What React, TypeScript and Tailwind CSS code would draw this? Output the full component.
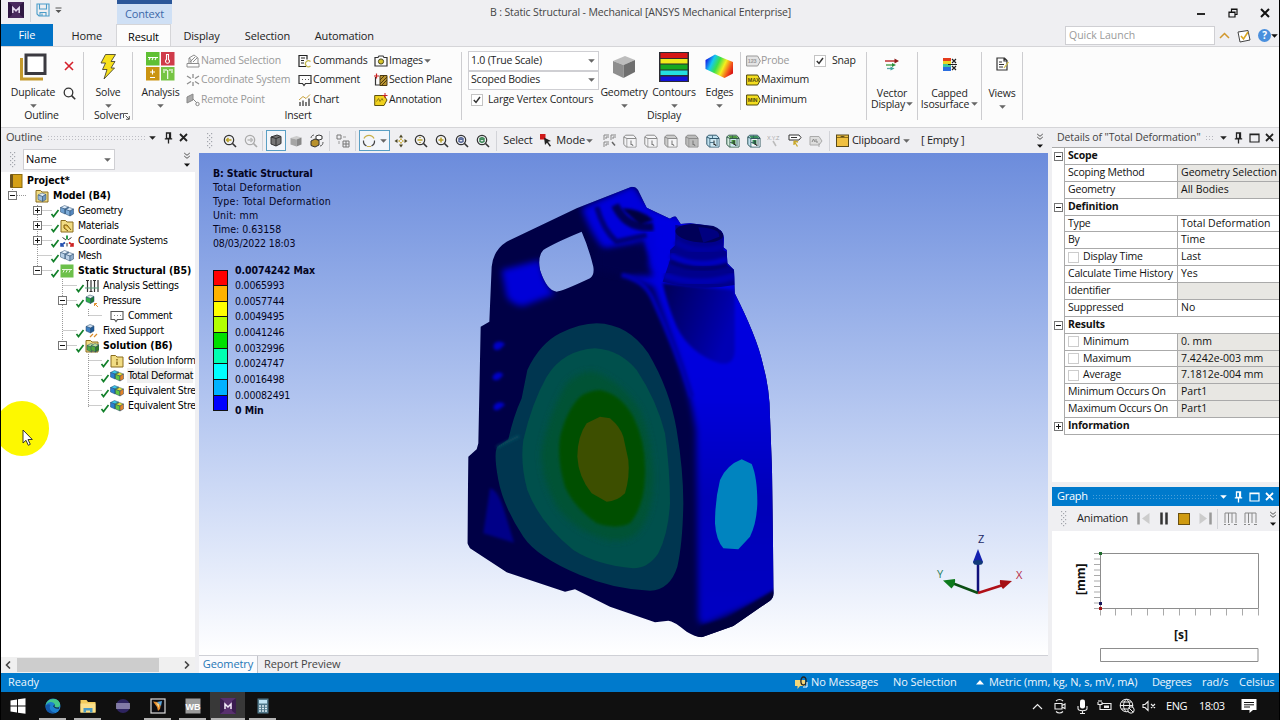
import type { ReactNode } from 'react';

type IconProps = { w?: number; h?: number; className?: string; children: ReactNode };

function Svg({ w = 14, h = 14, className = '', children }: IconProps) {
  return (
    <svg width={w} height={h} viewBox={`0 0 ${w} ${h}`} fill="none" className={`shrink-0 ${className}`}>
      {children}
    </svg>
  );
}

function Caret({ color = '#666', className = '' }: { color?: string; className?: string }) {
  return (
    <Svg w={7} h={4} className={className}>
      <path d="M0.2 0.2h6.600L3.500 3.800z" fill={color} />
    </Svg>
  );
}

function Grip() {
  return (
    <Svg w={6} h={16}>
      {[0, 4, 8, 12].map((y) => (
        <g key={y} fill="#a3a6ad">
          <rect x="0" y={y} width="1.2" height="1.2" />
          <rect x="4" y={y} width="1.2" height="1.2" />
          <rect x="2" y={y + 2} width="1.2" height="1.2" />
        </g>
      ))}
    </Svg>
  );
}

function Overflow() {
  return (
    <Svg w={8} h={16}>
      <path d="M1.2 1l2.8 2.3L6.8 1M1.2 4l2.8 2.3L6.8 4" stroke="#555" strokeWidth="1" />
      <path d="M1 11.5h6L4 14.7z" fill="#111" />
    </Svg>
  );
}

function Pin({ color }: { color: string }) {
  return (
    <Svg w={9} h={12}>
      <path d="M2.5 1h4v5.5h-4zM5.6 1v5.5M0.8 6.9h7.4M4.5 7v4.5" stroke={color} strokeWidth="1.3" />
    </Svg>
  );
}

function Cross({ color }: { color: string }) {
  return (
    <Svg w={9} h={9}>
      <path d="M1 1l7 7M8 1L1 8" stroke={color} strokeWidth="1.8" />
    </Svg>
  );
}

function Box({ color }: { color: string }) {
  return (
    <Svg w={11} h={10}>
      <path d="M1 1h9v8H1zM1 1.6h9" stroke={color} strokeWidth="1.2" />
    </Svg>
  );
}

function Check({ on }: { on?: boolean }) {
  return (
    <span className="flex h-3 w-3 shrink-0 items-center justify-center border border-[#c4c4c4] bg-white">
      {on && (
        <Svg w={10} h={10}>
          <path d="M1.8 5l2.2 2.4L8 2" stroke="#333" strokeWidth="1.5" />
        </Svg>
      )}
    </span>
  );
}

/* ---------- title bar and tabs ---------- */

function AppBadge() {
  return (
    <Svg w={16} h={16}>
      <rect width="16" height="16" fill="#4a2a5e" />
      <path d="M0 0l4 3v10l-4 3zM16 0l-4 3v10l4 3z" fill="#2f1742" />
      <path d="M4.8 11v-5.500L8 8.800l3.200-3.300V11" stroke="#e6dcf0" strokeWidth="1.500" />
    </Svg>
  );
}

function TitleBar() {
  return (
    <div className="flex h-[46px] shrink-0 bg-[#efeff2] text-[11px] tracking-[-0.15px]">
      <div className="flex w-[385px] flex-col">
        <div className="flex h-6">
          <div className="flex w-[116px] items-center pb-1">
            <span className="ml-[7px] flex"><AppBadge /></span>
            <span className="ml-[6px] h-6 w-px bg-[#d3d5da]" />
            <Svg w={14} h={14} className="ml-[5px]">
              <path d="M1 1h12v12H3l-2-2zM3.500 1v5h7V1M4 13V9.500h6V13M6 10.500v2" stroke="#4a9cc9" strokeWidth="1.100" />
            </Svg>
            <Svg w={7} h={7} className="ml-[5px]">
              <path d="M0.500 1h6" stroke="#555" />
              <path d="M0.500 3h6L3.500 6z" fill="#555" />
            </Svg>
          </div>
          <div className="flex w-[55px] items-center justify-center border-t-4 border-[#2b579a] bg-[#cfe0f5] text-[#3d68a8]">Context</div>
        </div>
        <div className="flex h-[22px] items-center text-[#222]">
          <span className="flex h-full w-[52px] items-center justify-center bg-[#0072c6] text-white">File</span>
          <span className="w-[64px] pt-[3px] pl-[5px] text-center">Home</span>
          <span className="flex h-[23px] w-[55px] items-center justify-center self-start border-x border-t border-[#d5d5d8] bg-[#fcfcfc] pt-[2px] text-black">Result</span>
          <span className="w-[62px] pt-[3px] text-center">Display</span>
          <span className="w-[71px] pt-[3px] text-center">Selection</span>
          <span className="w-[84px] pt-[3px] text-center">Automation</span>
        </div>
      </div>
      <div className="flex flex-1 flex-col">
        <div className="flex h-[26px] items-center">
          <span className="ml-[104px] w-[302px] whitespace-nowrap text-[10.500px] tracking-[-0.13px] text-[#444]">B : Static Structural - Mechanical [ANSYS Mechanical Enterprise]</span>
          <Svg w={10} h={10} className="ml-[404px]">
            <path d="M1 6h8" stroke="#111" strokeWidth="1.800" />
          </Svg>
          <Svg w={10} h={10} className="ml-[22px]">
            <path d="M1 4h6v5H1zM3.500 4V1H9v5.500H7M1 4.500h6M3.500 1.500H9" stroke="#111" strokeWidth="1.200" />
          </Svg>
          <Svg w={10} h={10} className="ml-[22px]">
            <path d="M1 1l8 8M9 1L1 9" stroke="#111" strokeWidth="2" />
          </Svg>
        </div>
        <div className="flex h-[19px] items-center justify-end">
          <span className="flex h-[19px] w-[150px] items-center border border-[#cfcfd3] bg-white pl-[3px] text-[10.500px] tracking-normal text-[#9a9a9a]">Quick Launch</span>
          <Svg w={11} h={7} className="ml-[4px]">
            <path d="M1 6l4.500-4.500L10 6" stroke="#d1972c" strokeWidth="1.500" />
          </Svg>
          <Svg w={14} h={14} className="ml-[7px]">
            <path d="M1 3l10-1.500 2 9.500-10 2z" fill="#fff" stroke="#444" />
            <path d="M4 7l2.500 3L11 3" stroke="#d9a520" strokeWidth="1.600" />
          </Svg>
          <span className="ml-[7px] flex h-[13px] w-[13px] items-center justify-center rounded-full bg-[#4a8fdd] text-[10px] font-bold text-white">?</span>
          <Caret color="#111" className="mr-[1px]" />
        </div>
      </div>
    </div>
  );
}

/* ---------- ribbon ---------- */

function Sep({ short }: { short?: boolean }) {
  return <span className={`mt-[5px] w-px shrink-0 bg-[#cdcdd0] ${short ? 'h-[58px]' : 'h-[68px]'}`} />;
}

function Group({ label, className, children }: { label: ReactNode; className: string; children: ReactNode }) {
  return (
    <div className={`flex shrink-0 flex-col ${className}`}>
      <div className="flex h-[61px]">{children}</div>
      <div className="flex h-[14px] items-center justify-center leading-none">{label}</div>
    </div>
  );
}

function BigButton({ icon, label, className }: { icon: ReactNode; label: string; className: string }) {
  return (
    <div className={`flex shrink-0 flex-col items-center ${className}`}>
      <span className="flex h-[40px] items-center">{icon}</span>
      <span className="flex h-[14px] items-center whitespace-nowrap">{label}</span>
      <Caret className="mt-[4px]" />
    </div>
  );
}

function Row({ icon, label, muted, caret }: { icon: ReactNode; label: string; muted?: boolean; caret?: boolean }) {
  return (
    <div className={`flex h-[19.5px] items-center whitespace-nowrap ${muted ? 'text-[#999]' : ''}`}>
      <span className="flex w-[15px] shrink-0">{icon}</span>
      {label}
      {caret && <Caret className="ml-px" />}
    </div>
  );
}

const tag = (text: string, fill: string, stroke: string) => (
  <Svg w={15} h={12}>
    <path d="M0.600 1h11L14.400 6l-2.800 5h-11z" fill={fill} stroke={stroke} />
    <text x="1.800" y="8.300" fontSize="5.500" fontWeight="700" fontFamily="Liberation Sans" fill={stroke}>{text}</text>
  </Svg>
);

const analysisIcon = (
  <Svg w={29} h={29}>
    <rect x="0" y="0" width="13.500" height="13.500" fill="#5fc034" />
    <path d="M2 5.500h10M3 8l1-2M6 8l1-2M9 8l1-2" stroke="#fff" strokeWidth="1.100" />
    <rect x="15" y="0" width="13.500" height="13.500" fill="#cf3b4a" />
    <path d="M20.500 2.500h2v5a2 2 0 1 1-2 0z" stroke="#fff" strokeWidth="1.100" />
    <rect x="0" y="15" width="13.500" height="13.500" fill="#cb9411" />
    <path d="M4 20h5M6.500 17.500v5M4 25.500h5" stroke="#fff" strokeWidth="1.100" />
    <rect x="15" y="15" width="13.500" height="13.500" fill="#76c443" />
    <path d="M21.700 18v9M18 17v4M20 17v2M24 17v2M26 17v4" stroke="#fff" strokeWidth="1.100" />
  </Svg>
);

const contoursIcon = (
  <Svg w={30} h={30}>
    <rect width="30" height="30" fill="#2b2b33" />
    <rect x="1.500" y="1" width="27" height="5" fill="#d41616" />
    <rect x="1.500" y="7" width="27" height="4.500" fill="#f0ea1c" />
    <rect x="1.500" y="12.500" width="27" height="5" fill="#17a81f" />
    <rect x="1.500" y="18.500" width="27" height="4.500" fill="#25dfe0" />
    <rect x="1.500" y="24.500" width="27" height="4.500" fill="#1212d8" />
  </Svg>
);

const edgesIcon = (
  <Svg w={29} h={27}>
    <defs>
      <linearGradient id="edges" x1="0" y1="0.300" x2="1" y2="0.700">
        <stop offset="0" stopColor="#1520e8" />
        <stop offset="0.220" stopColor="#14c8f0" />
        <stop offset="0.420" stopColor="#3be04a" />
        <stop offset="0.640" stopColor="#f4ef1e" />
        <stop offset="0.850" stopColor="#f4591b" />
        <stop offset="1" stopColor="#d81313" />
      </linearGradient>
    </defs>
    <path d="M0.500 7L10 1.500l8 3.500 10 4v11.500L19.500 25 10 20.500 0.500 16z" fill="url(#edges)" />
  </Svg>
);

function Select({ children }: { children: string }) {
  return (
    <div className="flex h-[19.5px] items-center justify-between border border-[#cfcfd3] bg-white pr-[3px] pl-[2px]">
      <span>{children}</span>
      <Caret />
    </div>
  );
}

function Ribbon() {
  return (
    <div className="flex h-[82px] shrink-0 border-y border-[#d5d5d8] bg-[#fcfcfc] text-[10.500px] tracking-[-0.2px] text-[#1e1e1e]">
      <Group label="Outline" className="w-[82px] pr-px">
        <BigButton
          className="w-[57px] pl-[7px]"
          label="Duplicate"
          icon={
            <Svg w={27} h={28}>
              <path d="M1.500 5v21H23" stroke="#c49a2e" strokeWidth="3" />
              <rect x="6" y="2" width="19" height="18.500" fill="#fff" stroke="#3b3a40" strokeWidth="3" />
            </Svg>
          }
        />
        <div className="flex w-[22px] flex-col items-center">
          <span className="flex h-[38px] items-center">
            <Svg w={10} h={10}>
              <path d="M1 1l8 8M9 1L1 9" stroke="#d5202c" strokeWidth="1.600" />
            </Svg>
          </span>
          <Svg w={13} h={13} className="mt-[2px]">
            <circle cx="5.500" cy="5.500" r="4.300" stroke="#333" strokeWidth="1.300" />
            <path d="M8.600 8.600l3.600 3.600" stroke="#333" strokeWidth="1.600" />
          </Svg>
        </div>
      </Group>
      <Sep />
      <Group
        className="w-[48px]"
        label={
          <span className="flex items-end pl-2">
            Solver
            <Svg w={7} h={7}>
              <path d="M0.500 5V0.500H5M2.500 2.500l3.500 3.500M6.300 3v3.300H3" stroke="#555" />
            </Svg>
          </span>
        }
      >
        <BigButton
          className="w-[48px]"
          label="Solve"
          icon={
            <Svg w={17} h={27}>
              <path d="M5.500 1.500h10l-4.500 7h4L11 15h3.500L4 26l3-9.500H2.500L5.500 10H1z" fill="#f7e01c" stroke="#4a4630" strokeWidth="0.900" />
            </Svg>
          }
        />
      </Group>
      <Sep />
      <Group label="Insert" className="w-[328px] pl-0.5">
        <BigButton className="w-[51px]" label="Analysis" icon={analysisIcon} />
        <div className="w-[112px] pt-1">
          <Row muted label="Named Selection" icon={<Svg w={14}><path d="M1 9.500h12V13H1zM3 9V4l5-3 4 3v5M4 8l5-5M7 8l4-4M3 4l2 1.500V9" stroke="#8d8d8d" /></Svg>} />
          <Row muted label="Coordinate System" icon={<Svg w={14}><path d="M7 1v4M7 9v4M1 3l4 2.500M13 3L9 5.500M1 11l4-2.500M13 11L9 8.500" stroke="#8d8d8d" strokeWidth="1.300" /></Svg>} />
          <Row muted label="Remote Point" icon={<Svg w={14}><path d="M1 4l6-3v6L1 10z" fill="#aaa" stroke="#888" /><path d="M7 6l4 4" stroke="#888" /><circle cx="11.500" cy="11" r="1.700" stroke="#888" /></Svg>} />
        </div>
        <div className="w-[76px] pt-1">
          <Row label="Commands" icon={<Svg w={14}><path d="M8 12.500H1v-11h8v4M3 4h4M3 6.500h3M3 9h3" stroke="#222" strokeWidth="1.200" /><path d="M12.500 7.500a3 3 0 1 0 0 4.500" stroke="#c3b64c" strokeWidth="1.300" /></Svg>} />
          <Row label="Comment" icon={<Svg w={14}><path d="M1 2.500h12v8H7.500L6 12.500 4.500 10.500H1z" stroke="#333" strokeWidth="1.200" /><path d="M4 6.500h1M7 6.500h1M10 6.500h1" stroke="#555" /></Svg>} />
          <Row label="Chart" icon={<Svg w={14}><path d="M2 13V9M5 13V7.500M8 13V9M11 13V5.500" stroke="#555" strokeWidth="1.500" /><path d="M1 7l4-3.500 3 2 4-4" stroke="#c9a23b" /></Svg>} />
        </div>
        <div className="pt-1">
          <Row caret label="Images" icon={<Svg w={14}><path d="M1 3.500h3L5 2h4l1 1.500h3v8.500H1z" stroke="#333" strokeWidth="1.200" /><circle cx="7" cy="7.500" r="2.600" fill="#d6c32a" stroke="#4b4a20" /></Svg>} />
          <Row label="Section Plane" icon={<Svg w={14}><path d="M1.500 4v8h5" stroke="#333" strokeWidth="1.200" /><path d="M6 2.500h7v10H6z" fill="#ba9430" stroke="#4b3a10" /><path d="M6 11l7-7M6 7l4-4M8 12l5-5" stroke="#4b3a10" /><path d="M2.500 0.500v5M0 3h5" stroke="#c92020" strokeWidth="1.200" /></Svg>} />
          <Row label="Annotation" icon={<Svg w={14}><path d="M0.700 2.500h9.300l3 4.500-3 5.500H0.700z" fill="#f0d11e" stroke="#5e5310" /><path d="M2.500 8.500l2-3 1.500 3 2-3 1 2" stroke="#8f7b14" /><path d="M11 0v5M8.500 2.500h5" stroke="#c92020" /></Svg>} />
        </div>
      </Group>
      <Sep />
      <Group label="Display" className="w-[404px]">
        <div className="ml-[6px] w-[131px] pt-1">
          <Select>1.0 (True Scale)</Select>
          <Select>Scoped Bodies</Select>
          <div className="flex h-[19.500px] items-center pl-[3px] whitespace-nowrap">
            <Check on />
            <span className="ml-[5px]">Large Vertex Contours</span>
          </div>
        </div>
        <BigButton
          className="w-[50px]"
          label="Geometry"
          icon={
            <Svg w={24} h={24}>
              <path d="M1 6L13 1l10 4-11.500 5z" fill="#bdbdbd" />
              <path d="M1 6l10.500 4v13L1 18z" fill="#8e8e8e" />
              <path d="M23 5L11.500 10v13L23 17z" fill="#6f6f6f" />
            </Svg>
          }
        />
        <BigButton className="w-[50px]" label="Contours" icon={contoursIcon} />
        <BigButton className="w-[41px]" label="Edges" icon={edgesIcon} />
        <Sep short />
        <div className="ml-[5px] w-[68px] pt-1">
          <Row muted label="Probe" icon={tag('123', '#e4e4e4', '#999')} />
          <Row label="Maximum" icon={tag('MAX', '#f3dd1f', '#4f480d')} />
          <Row label="Minimum" icon={tag('MIN', '#f3dd1f', '#4f480d')} />
        </div>
        <div className="flex h-[23px] items-center gap-[6px] pt-1">
          <Check on />
          Snap
        </div>
      </Group>
      <Sep />
      <div className="flex w-[50px] shrink-0 flex-col items-center">
        <span className="flex h-[34px] items-center">
          <Svg w={14} h={13}>
            <path d="M0 3h11" stroke="#b22" strokeWidth="1.400" />
            <path d="M9.500 0.500L14 3 9.500 5.500z" fill="#8d1b1b" />
            <path d="M1 7h7" stroke="#3a9a3a" strokeWidth="1.300" />
            <path d="M7 5l4 2-4 2z" fill="#2b8d3a" />
            <path d="M2 10.500h4" stroke="#58a8a8" strokeWidth="1.300" />
            <path d="M5.500 8.500l4 2-4 2z" fill="#3f9f9a" />
          </Svg>
        </span>
        <span className="mt-[7px] leading-[10.500px]">Vector</span>
        <span className="flex items-center leading-[10.500px]">Display<Caret className="ml-px" /></span>
      </div>
      <Sep />
      <div className="flex w-[63px] shrink-0 flex-col items-center">
        <span className="flex h-[34px] items-center">
          <Svg w={14} h={13}>
            <rect y="0" width="8" height="3" fill="#e53b1c" />
            <rect y="3" width="8" height="3" fill="#ecd522" />
            <rect y="6" width="8" height="3" fill="#3bc8a0" />
            <rect y="9" width="8" height="4" fill="#2a6ee0" />
            <path d="M9 1l4 4M13 1L9 5M9 8l4 4M13 8l-4 4M5 6.500h9" stroke="#222" strokeWidth="1.200" />
          </Svg>
        </span>
        <span className="mt-[7px] leading-[10.500px]">Capped</span>
        <span className="flex items-center leading-[10.500px]">Isosurface<Caret className="ml-[2px]" /></span>
      </div>
      <Sep />
      <BigButton
        className="w-[40px]"
        label="Views"
        icon={
          <Svg w={13} h={14} className="-mt-1.5">
            <path d="M1 1h7.500L11 3.500V13H1zM3 5h3M3 7.500h5M3 10h4M8 1v3h3" stroke="#333" strokeWidth="1.200" />
            <path d="M12.500 5L8 11" stroke="#d4c046" strokeWidth="1.200" />
          </Svg>
        }
      />
      <Sep />
    </div>
  );
}

/* ---------- outline panel ---------- */

function Dots({ className }: { className: string }) {
  return <span className={`h-[6px] bg-[radial-gradient(circle,currentColor_0.7px,transparent_0.8px)] bg-size-[3px_3px] ${className}`} />;
}

type TreeKind = 'book' | 'model' | 'solid' | 'materials' | 'axes' | 'mesh' | 'static' | 'settings' | 'pressure' | 'comment' | 'support' | 'solution' | 'info' | 'result';

const cube = (x: number, y: number, a: string, b: string, c: string) => (
  <g stroke="#27496d" strokeWidth="0.500">
    <path d={`M${x} ${y + 2}l4-2 4 1.500-3.500 2z`} fill={a} />
    <path d={`M${x} ${y + 2}l4.500 1.500v5L${x} ${y + 6.5}z`} fill={b} />
    <path d={`M${x + 4.5} ${y + 3.5}l3.500-2v5l-3.500 2z`} fill={c} />
  </g>
);

const folder = <path d="M1 3V1.500h4.500L7 3h6v10H1z" fill="#f1dc83" stroke="#8a6d1e" />;

const treeIcons: Record<TreeKind, ReactNode> = {
  book: <><rect x="2" y="0.500" width="11" height="13" fill="#d4a017" stroke="#8a6a10" /><rect x="1" y="0.500" width="3" height="13" fill="#6d5520" /></>,
  model: <>{folder}{cube(3, 4, '#dce9f5', '#9bbcdc', '#6f98c2')}</>,
  solid: <>{cube(0.5, 1.5, '#dbeaf8', '#6fa0d0', '#4d7fb5')}{cube(5.500, 3.500, '#cfe2f4', '#7fadd9', '#5587bd')}</>,
  materials: <>{folder}<path d="M4 6h3l4 5M4 6v3l4 3" stroke="#7a5a10" fill="#e5b73a" /></>,
  axes: <><path d="M7 5.500V1.500" stroke="#2c9c4b" strokeWidth="2" /><path d="M9 8.500l3.500 2.500M13 9v3h-3" stroke="#c22" strokeWidth="1.600" /><path d="M5 8.500L1.500 11M1 9v3h3" stroke="#2350b0" strokeWidth="1.600" /><path d="M2.500 3.500L6 6M11.500 3.500L8 6M7 9v3.500" stroke="#333" /></>,
  mesh: <>{cube(0.5, 1.5, '#e4eef8', '#b8cfe6', '#8facca')}{cube(5.500, 3.500, '#dde9f5', '#bdd2e8', '#8facca')}</>,
  static: <><rect x="0.500" y="0.500" width="13" height="13" fill="#6cc04a" /><path d="M2 5.500h10M3 8.500l1.500-3M6 8.500l1.500-3M9 8.500l1.500-3" stroke="#e8f7df" /></>,
  settings: <><path d="M2.500 1v12M6 1v12M9.500 1v12M13 1v12" stroke="#333" strokeWidth="1.200" /><path d="M1 1.500h3M8 1.500h3M4.500 12.500h3" stroke="#333" /><path d="M0 9h14" stroke="#5a9f7c" /></>,
  pressure: <>{cube(1, 1, '#e3efe3', '#2fae49', '#1d7a33')}<path d="M13 13L9.500 9.500M9.500 12V9.500H12" stroke="#e09030" /></>,
  comment: <><path d="M1 2.500h12v8H7.500L6 12.500 4.500 10.500H1z" fill="#fff" stroke="#555" strokeWidth="1.100" /><path d="M4 6.500h1M7 6.500h1M10 6.500h1" stroke="#888" /></>,
  support: <>{cube(1, 0.5, '#cfe2f4', '#3e7fc1', '#1f5a98')}<path d="M5 13l3-3M9 13l3-3" stroke="#d98b2b" strokeWidth="1.200" /></>,
  solution: <>{folder}{cube(2, 4.500, '#bfe39a', '#53a83c', '#c0b32c')}{cube(6, 4.500, '#bfe39a', '#53a83c', '#317c26')}</>,
  info: <>{folder}<path d="M7 5v1.500M7 7.500V11" stroke="#8a6d1e" strokeWidth="1.500" /></>,
  result: <>{cube(0.5, 1.500, '#38c5e8', '#2a7fd0', '#5bc24a')}{cube(5.500, 3.500, '#e8de2c', '#63c640', '#e58226')}</>,
};

type Node = { depth: number; kind: TreeKind; label: string; expander?: '+' | '-'; check?: boolean; bold?: boolean; active?: boolean };

const nodes: Node[] = [
  { depth: 0, kind: 'book', label: 'Project*', bold: true },
  { depth: 1, kind: 'model', label: 'Model (B4)', bold: true, expander: '-' },
  { depth: 2, kind: 'solid', label: 'Geometry', expander: '+', check: true },
  { depth: 2, kind: 'materials', label: 'Materials', expander: '+', check: true },
  { depth: 2, kind: 'axes', label: 'Coordinate Systems', expander: '+', check: true },
  { depth: 2, kind: 'mesh', label: 'Mesh', check: true },
  { depth: 2, kind: 'static', label: 'Static Structural (B5)', expander: '-', check: true, bold: true },
  { depth: 3, kind: 'settings', label: 'Analysis Settings', check: true },
  { depth: 3, kind: 'pressure', label: 'Pressure', expander: '-', check: true },
  { depth: 4, kind: 'comment', label: 'Comment' },
  { depth: 3, kind: 'support', label: 'Fixed Support', check: true },
  { depth: 3, kind: 'solution', label: 'Solution (B6)', expander: '-', check: true, bold: true },
  { depth: 4, kind: 'info', label: 'Solution Inform', check: true },
  { depth: 4, kind: 'result', label: 'Total Deformat', check: true, active: true },
  { depth: 4, kind: 'result', label: 'Equivalent Stre', check: true },
  { depth: 4, kind: 'result', label: 'Equivalent Stre', check: true },
];

const indents = ['w-0', 'w-[7px]', 'w-[32px]', 'w-[57px]', 'w-[82px]'];

function Expander({ sign }: { sign: '+' | '-' }) {
  return (
    <Svg w={9} h={9}>
      <rect x="0.500" y="0.500" width="8" height="8" fill="#fff" stroke="#777" />
      <path d={sign === '+' ? 'M2 4.500h5M4.500 2v5' : 'M2 4.500h5'} stroke="#111" />
    </Svg>
  );
}

function TreeRow({ node }: { node: Node }) {
  return (
    <div className="relative flex h-[15px] items-center whitespace-nowrap">
      <span className={`shrink-0 ${indents[node.depth]}`} />
      {node.depth > 0 && (
        <span className="flex w-[9px] shrink-0">{node.expander && <Expander sign={node.expander} />}</span>
      )}
      <span className={`flex shrink-0 items-end justify-end ${node.depth > 0 ? 'w-[18px]' : 'w-[8px]'}`}>
        {node.check && (
          <Svg w={10} h={9} className="translate-y-[3px]">
            <path d="M1.500 5l2 2.500L8.500 1" stroke="#12802a" strokeWidth="1.700" />
          </Svg>
        )}
      </span>
      <Svg w={14} h={14}>{treeIcons[node.kind]}</Svg>
      <span className={`ml-[3px] pl-px ${node.bold ? 'font-bold tracking-[-0.02px]' : 'tracking-[-0.3px]'} ${node.active ? 'bg-[#f0f0f0]' : ''}`}>{node.label}</span>
    </div>
  );
}

function OutlinePanel() {
  return (
    <div className="flex w-[194px] shrink-0 flex-col">
      <div className="flex h-[19px] items-center text-[11px] text-[#444]">
        <span className="w-[46px] pl-[5px] tracking-[-0.2px]">Outline</span>
        <Dots className="w-[99px] text-[#bdbdc4]" />
        <Caret color="#222" className="ml-[3px]" />
        <span className="ml-[8px] flex"><Pin color="#222" /></span>
        <span className="ml-[6px] flex"><Cross color="#222" /></span>
      </div>
      <div className="flex h-[25px] items-center pl-[9px]">
        <Grip />
        <div className="ml-[7px] flex h-[21px] w-[92px] items-center justify-between border border-[#cfcfd3] bg-white pr-[3px] pl-[2px] text-[11px]">
          Name
          <Caret />
        </div>
        <span className="ml-auto flex pr-[4px]"><Overflow /></span>
      </div>
      <div className="relative flex-1 overflow-hidden bg-white pt-px font-[DejaVu_Sans_Condensed,DejaVu_Sans,sans-serif] text-[10.500px] [font-stretch:condensed]">
        <svg width="194" height="260" className="absolute top-px left-0" fill="none" stroke="#999" strokeDasharray="1 1">
          <path d="M11.500 14v9M16 22.500h10M36.500 32v66M37.500 37.500h14M37.500 52.500h14M37.500 67.500h14M37.500 82.500h14M37.500 97.500h14" />
          <path d="M61.500 106v67M62.500 112.500h14M62.500 127.500h14M62.500 157.500h14M62.500 172.500h14" />
          <path d="M87.500 136v8M87.500 142.500h14M87.500 181v53M87.500 187.500h14M87.500 202.500h14M87.500 217.500h14M87.500 232.500h14" />
        </svg>
        {nodes.map((node, i) => (
          <TreeRow key={i} node={node} />
        ))}
        {/* click highlight around the pointer */}
        <div className="absolute top-[229px] -left-[6px] h-[55px] w-[54px] rounded-full bg-[#fdf800]" />
        <Svg w={12} h={18} className="absolute top-[257px] left-[21px]">
          <path d="M1 1v13l3-2.700 2.300 5 2-1L6 10.500h4.300z" fill="#fff" stroke="#222" strokeWidth="0.900" />
        </Svg>
      </div>
      <div className="flex h-4 items-center bg-[#f0f0f0] pl-[4px]">
        <Svg w={6} h={8}><path d="M5 0.500L1.500 4 5 7.500" stroke="#444" strokeWidth="1.600" /></Svg>
        <span className="ml-[6px] h-[14px] w-[142px] bg-[#cdcdcd]" />
        <Svg w={6} h={8} className="ml-[25px]"><path d="M1 0.500L4.500 4 1 7.500" stroke="#444" strokeWidth="1.600" /></Svg>
      </div>
    </div>
  );
}

/* ---------- graphics view ---------- */

function Lens({ color = '#b9a128', ring = '#333', mark }: { color?: string; ring?: string; mark: string }) {
  return (
    <Svg w={14} h={14}>
      <circle cx="6" cy="6" r="4.700" stroke={ring} strokeWidth="1.200" />
      <path d="M9.500 9.500l3.500 3.500" stroke={ring} strokeWidth="1.600" />
      <path d={mark} stroke={color} strokeWidth="1.500" />
    </Svg>
  );
}

function WireCube({ stroke = '#8b8b8b', face = '#f4f4f6', front = '#f4f4f6', dot }: { stroke?: string; face?: string; front?: string; dot?: string }) {
  return (
    <Svg w={14} h={14}>
      <path d="M0.800 3V10.500L3.500 13H13V4L10.500 1.200H2.500z" fill={face} stroke={stroke} />
      <path d="M0.800 3L4 4.500H13M4 4.500V13" stroke={stroke} />
      <path d="M4.500 5h8v7.500h-8z" fill={front} />
      {dot && <path d="M2.500 2h8l1.500 2H4zM5.500 6h4v4h-4z" fill={dot} />}
      <path d="M8 6.500v4.500l1-0.900 1 1.900" stroke={stroke === '#8b8b8b' ? '#777' : '#222'} />
      {stroke !== '#8b8b8b' && <path d="M4 8.500h4M6.500 1.500v3M11 5v7" stroke={stroke} strokeWidth="0.800" />}
    </Svg>
  );
}

function Cell({ children, className = 'w-[20.600px]' }: { children: ReactNode; className?: string }) {
  return <span className={`flex shrink-0 items-center justify-center ${className}`}>{children}</span>;
}

const VSep = ({ className = '' }: { className?: string }) => <span className={`h-5 w-px shrink-0 bg-[#d2d3d8] ${className}`} />;

function ViewToolbar() {
  return (
    <div className="flex h-[25px] shrink-0 items-center text-[11px] tracking-[-0.2px] text-[#222]">
      <Cell className="w-[21px]"><Grip /></Cell>
      <Cell><Lens mark="M8.500 6H3.500M5.500 4l-2 2 2 2" /></Cell>
      <Cell><Lens ring="#aaa" color="#bbb" mark="M3.500 6h5M6.500 4l2 2-2 2" /></Cell>
      <VSep className="mr-[3px] ml-px" />
      <Cell className="h-[21px] w-[20px] border border-[#5a9fc4] bg-[#f3f6fa]">
        <Svg w={12} h={13}>
          <path d="M1 3l6-2 4 1.500v7L6 12 1 10z" fill="#777" stroke="#333" /><path d="M1 3l5 1.500L11 2.500M6 4.500V12" stroke="#333" />
        </Svg>
      </Cell>
      <Cell>
        <Svg w={12} h={12}><path d="M0.500 3l6-2 5 1.500-5 2z" fill="#ccc" /><path d="M0.500 3l6 1.500v7l-6-2z" fill="#a5a5a5" /><path d="M11.500 2.500l-5 2v7l5-2z" fill="#888" /></Svg>
      </Cell>
      <Cell>
        <Svg w={14} h={14}><path d="M1 7l4-2 4 1.500V11l-4 2-4-1.500z" fill="#b8912c" stroke="#333" /><path d="M6 2l3-1 3 1v3l-3 1-3-1z" fill="#fff" stroke="#333" /><path d="M1 4c0-2 2-3 3-3M13 8c0 2-1 4-3 4" stroke="#555" /></Svg>
      </Cell>
      <VSep className="mr-[2px] ml-[2px]" />
      <Cell className="w-[21px]">
        <Svg w={14} h={14}><path d="M1 1h4v4H1zM7 7h6v6H7zM7 10h6M10 7v6" stroke="#777" /><path d="M7 3h3M3 7v3" stroke="#999" /></Svg>
      </Cell>
      <VSep className="mr-[3px] ml-[2px]" />
      <Cell className="h-[21px] w-[31px] gap-[4px] border border-[#5a9fc4] bg-[#f3f6fa]">
        <Svg w={14} h={14}><path d="M2 4.500a5.500 5.500 0 0 1 10 0" stroke="#c7b04a" strokeWidth="1.300" /><path d="M12.500 6.500a5.500 5.500 0 0 1-3 5.500M4.500 12a5.500 5.500 0 0 1-3-5.500" stroke="#444" strokeWidth="1.200" /><path d="M5 12.500h4" stroke="#c7b04a" /></Svg>
        <Caret />
      </Cell>
      <Cell>
        <Svg w={14} h={14}><path d="M7 0.500L9 3.500H5zM7 13.500l2-3H5zM0.500 7l3-2v4zM13.500 7l-3-2v4z" fill="#4a4525" /><path d="M7 4.500v1.500M7 8v1.500M4.500 7H6M8 7h1.500" stroke="#c9a92c" strokeWidth="1.600" /></Svg>
      </Cell>
      <Cell><Lens mark="M3.500 6h5M6 3v1M6 8v1" /></Cell>
      <Cell><Lens mark="M3.500 6h5M6 3.500v5" /></Cell>
      <Cell><Lens color="#5a6a9a" mark="M4 4.500l2-1 2 1v3l-2 1-2-1zM4 4.500l2 1 2-1" /></Cell>
      <Cell><Lens color="#3f8a5a" mark="M4 4.500l2-1 2 1v3l-2 1-2-1zM4 4.500l2 1 2-1" /></Cell>
      <VSep className="mr-[6px] ml-[3px]" />
      <span className="w-[37px]">Select</span>
      <Svg w={12} h={13}>
        <rect width="5.500" height="5.500" fill="#d01a1a" />
        <path d="M4 3.500l7 3.500-3 0.800 3 4-1.200 0.900L7 8.800 5 11z" fill="#222" />
      </Svg>
      <span className="ml-[4px] w-[30px]">Mode</span>
      <Caret className="mr-[6px]" />
      <Cell>
        <Svg w={14} h={14}><path d="M1 13V8h5M1 6V1h5M8 6V1h5M3 3h3M10 3h3M3 10h3M3 5V3M10 5V3M3 12v-2" stroke="#888" /><path d="M9 8l3 3.500" stroke="#666" strokeWidth="1.500" /></Svg>
      </Cell>
      <Cell><WireCube /></Cell>
      <Cell><WireCube /></Cell>
      <Cell><WireCube face="#ccc" /></Cell>
      <Cell><WireCube face="#bbb" front="#bbb" /></Cell>
      <Cell><WireCube stroke="#335a70" face="#bfe0ee" front="#cfe8f2" /></Cell>
      <Cell><WireCube stroke="#335a4a" face="#d8eee0" front="#cfe8f2" dot="#4f9a42" /></Cell>
      <Cell><WireCube stroke="#335a60" face="#bfe0ee" dot="#38905a" /></Cell>
      <Cell>
        <Svg w={15} h={14}><text x="0" y="5.500" fontSize="5.500" fontFamily="Liberation Sans" fill="#aaa">X.Y.Z</text><path d="M6 7l3 5" stroke="#bbb" strokeWidth="1.500" /></Svg>
      </Cell>
      <Cell>
        <Svg w={14} h={14}><path d="M1 1h10l2 2.500-2 2.500H1z" fill="#fff" stroke="#333" /><path d="M3 3.500h6" stroke="#333" /><path d="M6 7l3.500 5.500M6 7v4M6 7l4 1" stroke="#c9a92c" strokeWidth="1.300" /></Svg>
      </Cell>
      <Cell>
        <Svg w={14} h={14}><path d="M1 2.500h9L13 7l-3 4H1z" fill="#ddd" stroke="#aaa" /><path d="M3 8l1.500-3L6 8M7 5v3h2" stroke="#888" /><path d="M10 9v4" stroke="#aaa" /></Svg>
      </Cell>
      <VSep className="mr-[6px] ml-[3px]" />
      <Svg w={13} h={13}><rect x="0.500" y="1" width="12" height="11.500" fill="#f0c040" stroke="#5a4a18" /><path d="M4 3.500c0-2 5-2 5 0z" fill="#5a4a18" /><path d="M1 3.500h11" stroke="#8c6d18" /></Svg>
      <span className="ml-[3px] w-[51px]">Clipboard</span>
      <Caret />
      <span className="ml-[11px] whitespace-nowrap">[ Empty ]</span>
      <span className="ml-auto flex pr-[4px]"><Overflow /></span>
    </div>
  );
}

const legend = [
  { value: '0.0074242 Max', fill: '#ff0000' },
  { value: '0.0065993', fill: '#ffb200' },
  { value: '0.0057744', fill: '#ffff00' },
  { value: '0.0049495', fill: '#b2ff00' },
  { value: '0.0041246', fill: '#00e000' },
  { value: '0.0032996', fill: '#00ffb2' },
  { value: '0.0024747', fill: '#00ffff' },
  { value: '0.0016498', fill: '#00b2ff' },
  { value: '0.00082491', fill: '#0000ff' },
  { value: '0 Min', fill: '' },
];

function Jerrycan() {
  const body =
    'M575 50Q588 50 594 60L620 113 690 146Q700 138 708 140L722 162 750 160 820 168Q852 180 852 205L850 232 860 240 862 280 882 300 884 370Q950 500 968 580Q990 660 990 740L996 900 1001 1270Q1000 1285 990 1292L880 1368 785 1402Q765 1400 740 1385Q700 1352 685 1352L645 1357 510 1310 405 1258 375 1265 200 1207 90 1135 82 1120 85 860 110 838 115 820 122 470 148 455 155 290Q160 240 200 215L410 115z';
  const hole = 'M425 185Q340 220 310 240Q292 260 300 300Q320 362 350 365Q365 365 450 325Q464 315 460 290Q445 230 425 185z';
  return (
    <svg width="350" height="480" viewBox="0 0 1050 1440" className="absolute top-[17px] left-[241px]">
      <defs>
        <clipPath id="can"><path d={body + hole} clipRule="evenodd" /></clipPath>
        <linearGradient id="side" x1="0" y1="0" x2="0" y2="1">
          <stop offset="0" stopColor="#0000e4" />
          <stop offset="0.450" stopColor="#0000dc" />
          <stop offset="0.700" stopColor="#0000b8" />
          <stop offset="1" stopColor="#0000c4" />
        </linearGradient>
        <linearGradient id="neck" x1="0" y1="0" x2="1" y2="0.400">
          <stop offset="0" stopColor="#000058" />
          <stop offset="0.600" stopColor="#00008e" />
          <stop offset="1" stopColor="#0000b4" />
        </linearGradient>
        <filter id="soft" x="-20%" y="-20%" width="140%" height="140%"><feGaussianBlur stdDeviation="9" /></filter>
        <filter id="soft2" x="-20%" y="-20%" width="140%" height="140%"><feGaussianBlur stdDeviation="5" /></filter>
      </defs>
      <g clipPath="url(#can)">
        <rect width="1050" height="1440" fill="#000046" />
        <path d="M600 110L760 150 1060 300V1250L790 1365 775 1350 768 780Q750 660 700 520L640 350 545 312Q640 300 620 240z" fill="url(#side)" filter="url(#soft)" />
        <path d="M425 115L580 45 640 130 650 300 610 200 590 235 500 250Q450 190 425 115z" fill="#0000dc" filter="url(#soft)" />
        <path d="M470 110Q490 180 530 215L620 195" stroke="#000078" strokeWidth="16" fill="none" filter="url(#soft2)" />
        <path d="M525 105Q560 180 640 170" stroke="#000058" strokeWidth="24" fill="none" filter="url(#soft2)" />
        <path d="M545 115Q600 115 640 150L600 165z" fill="#00003c" filter="url(#soft2)" />
        <path d="M470 240L600 215 640 320 540 315 470 300z" fill="#00004c" filter="url(#soft)" />
        <path d="M545 315Q610 325 640 390Q710 540 755 680" stroke="#0000b0" strokeWidth="14" fill="none" filter="url(#soft2)" />
        <path d="M185 300L300 270Q315 350 345 372L250 408Q215 405 200 380z" fill="#0000d8" filter="url(#soft)" />
        {/* filler neck */}
        <path d="M668 340L884 360 884 545Q880 590 835 578Q750 550 710 470Q680 400 668 340z" fill="url(#neck)" filter="url(#soft2)" />
        <path d="M706 165L850 180 850 240 860 245 862 285 884 300 884 345Q780 365 668 335L690 270 690 240 706 225z" fill="#00008c" />
        <path d="M706 215Q770 258 852 228" stroke="#0000a0" strokeWidth="18" fill="none" filter="url(#soft2)" />
        <path d="M690 255Q770 300 862 268" stroke="#0000c0" strokeWidth="18" fill="none" filter="url(#soft2)" />
        <path d="M690 275Q770 312 862 285" stroke="#000068" strokeWidth="10" fill="none" filter="url(#soft2)" />
        <path d="M672 315Q770 355 884 318" stroke="#0000b0" strokeWidth="20" fill="none" filter="url(#soft2)" />
        <ellipse cx="778" cy="190" rx="72" ry="27" transform="rotate(6 778 190)" fill="#000058" />
        <path d="M775 172Q840 175 838 200L790 218z" fill="#000080" />
        {/* base edge */}
        <path d="M770 1400L780 1368 860 1345 1010 1255V1440H770z" fill="#00003c" filter="url(#soft2)" />
        <path d="M150 955Q175 960 195 1030L222 1118 130 1090z" fill="#000088" filter="url(#soft2)" />
        <path d="M163 520Q180 508 195 522L180 538Q163 545 160 530zM163 612Q180 600 190 614L178 628Q160 636 157 622zM163 704Q180 690 195 704L180 716Q165 726 160 714z" fill="#0000c8" filter="url(#soft2)" />
        {/* deformation bands */}
        <path d="M470 460Q565 462 625 550Q690 660 710 780Q730 900 730 1000Q728 1120 712 1190Q690 1260 630 1262Q520 1258 420 1215Q290 1160 250 1100Q190 1010 175 930Q160 850 172 830L205 808Q220 740 245 685L262 600Q300 520 360 490Q420 460 470 460z" fill="#003650" />
        <path d="M465 535Q540 540 590 600Q650 690 675 790Q690 900 690 1000Q685 1090 655 1150Q625 1195 580 1195Q470 1185 400 1140Q300 1060 262 960Q240 880 250 810Q275 700 320 620Q370 540 465 535z" fill="#00504c" />
        <path d="M465 605Q550 640 600 720Q640 820 640 920Q640 1040 590 1090Q560 1120 500 1110Q400 1080 350 1010Q300 920 305 840Q330 720 380 640Q420 600 465 605z" fill="#005236" filter="url(#soft)" />
        <path d="M480 660Q540 670 580 740Q620 820 615 920Q612 1010 570 1060Q530 1080 470 1060Q400 1010 375 950Q350 870 360 800Q380 720 420 680Q450 660 480 660z" fill="#005000" filter="url(#soft2)" />
        <path d="M480 740L510 745Q540 770 550 800L565 870Q570 920 555 970Q530 995 500 995L455 970Q415 920 412 860Q412 800 440 760z" fill="#3d4f00" />
        <path d="M170 832L238 798" stroke="#0a5060" strokeWidth="6" filter="url(#soft2)" />
        <path d="M905 868L935 882Q952 920 952 1000Q950 1060 930 1100L895 1138 850 1135Q828 1110 825 1060Q825 990 840 930Q860 885 905 868z" fill="#0084bf" />
      </g>
    </svg>
  );
}

function Triad() {
  return (
    <svg width="96" height="76" viewBox="0 -5 96 76" className="absolute top-[373px] left-[733px]" fontFamily="Open Sans" fontSize="11">
      <path d="M46 62V30" stroke="#10107c" strokeWidth="2.500" />
      <path d="M46 18l5 13q-5 5-10 0z" fill="#1420b0" />
      <ellipse cx="46" cy="31.500" rx="4.800" ry="2.500" fill="#123a78" />
      <path d="M46 62L20 52" stroke="#0c4f14" strokeWidth="2.500" />
      <path d="M11 49.500l12-1.500q1 5-3.500 9.500z" fill="#0d7a1c" />
      <path d="M46 62l25-8" stroke="#b01018" strokeWidth="2.500" />
      <path d="M80 50l-12-1q-1 4 3 9z" fill="#a50f14" />
      <text x="46" y="11.500" fill="#222a66">Z</text>
      <text x="5" y="47" fill="#2a7f5c">Y</text>
      <text x="84" y="48" fill="#b52a44">X</text>
    </svg>
  );
}

function GraphicsView() {
  return (
    <div className="ml-[4px] flex w-[849px] shrink-0 flex-col">
      <ViewToolbar />
      <div className="relative flex-1 overflow-hidden bg-linear-to-b from-[#6c8cdc] to-white">
        <div className="flex flex-col pt-[13px] pl-[14px] font-[DejaVu_Sans_Condensed,DejaVu_Sans,sans-serif] text-[10.500px] leading-[14.100px] text-[#05051e] [font-stretch:condensed]">
          <span className="font-bold tracking-[-0.14px]">B: Static Structural</span>
          <span className="tracking-[0.28px]">Total Deformation</span>
          <span className="tracking-[0.28px]">Type: Total Deformation</span>
          <span className="tracking-[0.200px]">Unit: mm</span>
          <span>Time: 0.63158</span>
          <span className="tracking-[-0.150px]">08/03/2022 18:03</span>
          <div className="mt-[11px] flex flex-col">
            {legend.map(({ value, fill }, i) => (
              <div key={value} className="flex h-[15.650px] items-start">
                <span
                  className={`h-full w-[15px] shrink-0 translate-y-[8px] ${fill ? 'border border-[#111] border-b-0' : 'border-t border-[#111]'}`}
                  style={{ background: fill || undefined }}
                />
                <span className={`ml-[7px] leading-[16px] ${i === 0 || i === 9 ? 'font-bold tracking-[-0.1px]' : 'tracking-[-0.2px]'}`}>{value}</span>
              </div>
            ))}
          </div>
        </div>
        <Jerrycan />
        <Triad />
      </div>
      <div className="flex h-[18px] shrink-0 items-center border-t border-[#cfd0d6] text-[11px] tracking-[-0.1px]">
        <span className="flex h-full w-[59px] items-center justify-center border-r border-[#c3c4ca] bg-[#fbfbfd] text-[#1d76b5]">Geometry</span>
        <span className="pl-[6px] text-[#444]">Report Preview</span>
      </div>
    </div>
  );
}

/* ---------- right column ---------- */

type Detail = { name: string; value?: string; head?: '+' | '-'; grey?: boolean; box?: boolean };

const details: Detail[] = [
  { name: 'Scope', head: '-' },
  { name: 'Scoping Method', value: 'Geometry Selection', grey: true },
  { name: 'Geometry', value: 'All Bodies', grey: true },
  { name: 'Definition', head: '-' },
  { name: 'Type', value: 'Total Deformation' },
  { name: 'By', value: 'Time' },
  { name: 'Display Time', value: 'Last', box: true },
  { name: 'Calculate Time History', value: 'Yes' },
  { name: 'Identifier', value: '', grey: true },
  { name: 'Suppressed', value: 'No' },
  { name: 'Results', head: '-' },
  { name: 'Minimum', value: '0. mm', box: true, grey: true },
  { name: 'Maximum', value: '7.4242e-003 mm', box: true, grey: true },
  { name: 'Average', value: '7.1812e-004 mm', box: true, grey: true },
  { name: 'Minimum Occurs On', value: 'Part1', grey: true },
  { name: 'Maximum Occurs On', value: 'Part1', grey: true },
  { name: 'Information', head: '+' },
];

function WindowButtons({ color }: { color: string }) {
  return (
    <div className="ml-auto flex items-center pr-[5px]">
      <Caret color={color} />
      <span className="ml-[7px] flex"><Pin color={color} /></span>
      <span className="ml-[6px] flex"><Box color={color} /></span>
      <span className="ml-[5px] flex"><Cross color={color} /></span>
    </div>
  );
}

function DetailsPanel() {
  return (
    <div className="flex h-[354px] shrink-0 flex-col bg-white">
      <div className="flex h-[19px] shrink-0 items-center bg-[#efeff2] text-[10.500px] tracking-[-0.1px] text-[#444]">
        <span className="pl-[5px] whitespace-nowrap">Details of "Total Deformation"</span>
        <Dots className="ml-[5px] w-[8px] text-[#b5b5bc]" />
        <WindowButtons color="#222" />
      </div>
      <div className="border-t border-[#aaa] text-[10.500px] tracking-[-0.2px] text-[#111]">
        {details.map(({ name, value, head, grey, box }) => (
          <div key={name} className="flex h-[16.880px] whitespace-nowrap">
            <span className="flex w-[13px] shrink-0 items-center justify-center border-r border-[#aaa]">
              {head && <Expander sign={head} />}
            </span>
            {head ? (
              <span className="flex flex-1 items-center border-b border-[#aaa] pl-[3px] font-bold">{name}</span>
            ) : (
              <>
                <span className="flex w-[113px] shrink-0 items-center border-r border-b border-[#aaa] pl-[3px]">
                  {box && <span className="mr-[4px] h-[11px] w-[11px] border border-[#ccc]" />}
                  {name}
                </span>
                <span className={`flex flex-1 items-center border-b border-[#aaa] pl-[3px] tracking-normal ${grey ? 'bg-[#e8e7e3]' : ''}`}>{value}</span>
              </>
            )}
          </div>
        ))}
      </div>
    </div>
  );
}

function GraphPanel() {
  return (
    <div className="mt-[5px] flex flex-1 flex-col bg-white">
      <div className="flex h-[19px] shrink-0 items-center bg-[#007acc] text-[11px] text-white">
        <span className="w-[40px] pl-[5px] tracking-[-0.3px]">Graph</span>
        <Dots className="w-[125px] text-[#4a9fd9]" />
        <WindowButtons color="#fff" />
      </div>
      <div className="flex h-[25px] shrink-0 items-center bg-[#efeff2] pl-[9px] text-[11px] tracking-[-0.2px] text-[#222]">
        <Grip />
        <span className="ml-[10px] w-[60px]">Animation</span>
        <Svg w={13} h={13}><path d="M1.500 0.500v12" stroke="#999" strokeWidth="2.500" /><path d="M12.500 1v11L5 6.500z" fill="#ccc" /></Svg>
        <Svg w={8} h={13} className="ml-[10px]"><path d="M1.500 0.500v12M6.500 0.500v12" stroke="#333" strokeWidth="2.500" /></Svg>
        <Svg w={12} h={12} className="ml-[10px]"><rect x="0.500" y="0.500" width="11" height="11" fill="#cf9a10" stroke="#6b5010" /></Svg>
        <Svg w={13} h={13} className="ml-[9px]"><path d="M0.500 1v11L8 6.500z" fill="#ccc" /><path d="M11.500 0.500v12" stroke="#999" strokeWidth="2.500" /></Svg>
        <VSep className="mr-[6px] ml-[5px]" />
        <Svg w={13} h={14}><path d="M1 11V1h11v10M4.500 1v10M8 1v10M0 12.500h2M4 12.500h2M10 12.500h3" stroke="#888" /></Svg>
        <Svg w={13} h={14} className="ml-[7px]"><path d="M1 11V1h11v10M4.500 1v10M8 1v10M0 12.500h2M4 12.500h2M10 12.500h3" stroke="#888" /></Svg>
        <span className="ml-auto flex pr-[2px]"><Overflow /></span>
      </div>
      <svg width="227" height="142" viewBox="0 0 227 142" fill="none" fontFamily="Open Sans" fontSize="12" fontWeight="700">
        <path d="M48.500 22.500h158v55h-158z" stroke="#8d8d8d" />
        <path d="M42 22.500h6M42 28h6M42 33.500h6M42 39h6M42 44.500h6M42 50h6M42 55.500h6M42 61h6M42 66.500h6M42 72h6M42 77.500h6" stroke="#aaa" />
        <path d="M48.500 78v6.500M63.500 78v6.500M79.500 78v6.500M95.500 78v6.500M111.500 78v6.500M127.500 78v6.500M143.500 78v6.500M158.500 78v6.500M174.500 78v6.500M190.500 78v6.500M206.500 78v6.500" stroke="#aaa" />
        <rect x="47" y="21" width="3" height="3" fill="#1d6b2a" />
        <rect x="47" y="71" width="3" height="3" fill="#15155a" />
        <rect x="47" y="76" width="3" height="3" fill="#a01515" />
        <text x="0" y="0" transform="translate(33 64) rotate(-90)" fill="#111">[mm]</text>
        <text x="122" y="108" fill="#111">[s]</text>
        <path d="M48.500 117.500h157.500v13H48.500z" stroke="#8d8d8d" />
      </svg>
    </div>
  );
}

/* ---------- status bar and taskbar ---------- */

function StatusBar() {
  return (
    <div className="flex h-[19px] shrink-0 items-center bg-[#007acc] text-[11px] tracking-[-0.05px] whitespace-nowrap text-[#eef6fc]">
      <span className="w-[793px] pl-[7px]">Ready</span>
      <Svg w={15} h={14}>
        <path d="M1 4h10v6H6l-2.500 3V10H1z" fill="#f3d77a" />
        <ellipse cx="9.500" cy="5" rx="2.600" ry="4" stroke="#222" strokeWidth="1.300" />
        <path d="M13 6v5H9" stroke="#fff" />
      </Svg>
      <span className="ml-[2px] w-[82px]">No Messages</span>
      <span className="w-[83px]">No Selection</span>
      <Svg w={8} h={5}><path d="M0 4.500L4 0l4 4.500z" fill="#fff" /></Svg>
      <span className="ml-[5px] w-[163px]">Metric (mm, kg, N, s, mV, mA)</span>
      <span className="w-[50px] tracking-[-0.4px]">Degrees</span>
      <span className="w-[37px]">rad/s</span>
      <span>Celsius</span>
    </div>
  );
}

const apps: { icon: ReactNode; open?: boolean; active?: boolean }[] = [
  { icon: <path d="M0.500 2.500l6.500-1v6H0.500zM8 1.300L15.500 0.300v7.200H8zM0.500 8.500H7v6l-6.500-1zM8 8.500h7.500v7.200L8 14.700z" fill="#fff" /> },
  { open: true, icon: <><circle cx="8" cy="8" r="7.500" fill="#1b7fd0" /><path d="M0.500 8C1 2 8-1 13 2.500c3 2.500 3 6.500-1 7-2 0-3-1-2-2.500C9 3 2 3 0.500 8z" fill="#43c78a" /><path d="M5.500 7c-2 3 0 7 5 7.500C5 17 0 13 0.500 8 2 6 4 5.500 5.500 7z" fill="#1257a8" /><path d="M9.500 7c-1.500 1-0.500 3.500 4.500 3" stroke="#111" strokeWidth="1" /></> },
  { open: true, icon: <><path d="M0.500 2h6l1.500 2h7.500v10.500H0.500z" fill="#f3cc5c" /><path d="M0.500 5.500h15V14.500H0.500z" fill="#fbe08a" /><path d="M3.500 14.500V10h9v4.500h-2.500v-2H6v2z" fill="#4a9ac4" /></> },
  { icon: <><circle cx="8" cy="8" r="7" fill="#2e2460" /><path d="M1 6h14M1 8h14M1 10h14" stroke="#d6d0ec" strokeWidth="1.100" /></> },
  { open: true, icon: <><rect x="1" y="1" width="14" height="14" fill="#0c0c12" stroke="#ddd" strokeWidth="1.200" /><path d="M3 3.500l4 0.500 4 2-1 5-2 2-1-4z" fill="#e48a2c" /><path d="M7 4l5-1-1 5z" fill="#5aa5dc" /><path d="M6 5l3 1 0 4z" fill="#f7d68a" /></> },
  { open: true, icon: <><rect x="0.500" y="0.500" width="15" height="15" fill="#9c9c9c" /><text x="0.500" y="11.500" fontFamily="Liberation Sans" fontSize="9" fontWeight="700" fill="#fff">WB</text></> },
  { open: true, active: true, icon: <><rect width="16" height="16" fill="#58306e" /><path d="M0 0l4 3v10l-4 3zM16 0l-4 3v10l4 3z" fill="#3a1c4e" /><path d="M5 11V6l3 3 3-3v5" stroke="#f1e9f7" strokeWidth="1.500" /></> },
  { open: true, icon: <><rect x="2.500" y="0.500" width="11" height="15" fill="#51788a" /><rect x="4" y="2" width="8" height="3.500" fill="#bfe3f2" /><path d="M4 8h2M7 8h2M10 8h2M4 10.500h2M7 10.500h2M10 10.500h2M4 13h2M7 13h2M10 13h2" stroke="#dcecf3" strokeWidth="1.500" /></> },
];

function Taskbar() {
  return (
    <div className="flex h-7 shrink-0 items-center bg-[#101010] text-[11px] text-white">
      {apps.map(({ icon, open, active }, i) => (
        <span key={i} className={`flex h-full shrink-0 flex-col items-center ${i === 0 ? 'w-[34px]' : 'w-[35px]'} ${active ? 'bg-[#383838]' : ''}`}>
          <Svg w={16} h={16} className="mt-[6px]">{icon}</Svg>
          {open && <span className={`mt-auto h-[2px] bg-[#b4b4b4] ${active ? 'w-[34px]' : 'w-[27px]'}`} />}
        </span>
      ))}
      <div className="ml-auto flex items-center">
        <Cell className="w-[22.400px]"><Svg w={11} h={7}><path d="M1 6l4.500-4.500L10 6" stroke="#eee" strokeWidth="1.200" /></Svg></Cell>
        <Cell className="w-[22.400px]">
          <Svg w={12} h={16}><path d="M1 5.500h7v5.500H1zM8 7.500l3-1.500v4.500L8 9M2 3c2-2 5-2 7 0M2 13.500c2 2 5 2 7 0" stroke="#eee" strokeWidth="1.100" /></Svg>
        </Cell>
        <Cell className="w-[22.400px]">
          <Svg w={11} h={15}><rect x="3" y="0.500" width="5" height="9" rx="2" fill="#fff" /><path d="M1 7v2.500c0 3 9 3 9 0V7M5.500 12v3M3 14.500h5" stroke="#eee" strokeWidth="1.100" /></Svg>
        </Cell>
        <Cell className="w-[22.400px]">
          <Svg w={15} h={12}><path d="M5 3.500h9v6H5M1 2v2.500h4V2M2 0v2M4 0v2M3 4.500v5h2" stroke="#eee" strokeWidth="1.100" /><path d="M7 5.500h5v2.500H7z" fill="#eee" /></Svg>
        </Cell>
        <Cell className="w-[22.400px]">
          <Svg w={16} h={16}><circle cx="7.500" cy="7.500" r="6.300" stroke="#eee" /><path d="M1 7.500h13M2.500 4h10M2.500 11h6M7.500 1c-4 4-4 9 0 13M7.500 1c3 3 3.500 5 3 8" stroke="#eee" /><circle cx="12" cy="12" r="3.200" fill="#101010" stroke="#eee" /><path d="M10 10l4 4" stroke="#eee" /></Svg>
        </Cell>
        <Cell className="w-[22px]">
          <Svg w={14} h={12}><path d="M1 4.500h2L6 1.500v9L3 7.500H1zM9 4l4 4M13 4L9 8" stroke="#eee" strokeWidth="1.100" /></Svg>
        </Cell>
        <span className="ml-[6px] w-[33px] tracking-[-0.4px]">ENG</span>
        <span className="w-[42px] tracking-[-0.5px]">18:03</span>
        <Svg w={16} h={16} className="mr-[22px]"><path d="M0.500 1h15v11H12l-3.500 3V12h-8z" fill="#fff" /><path d="M3 4.500h10M3 6.800h10M3 9h6" stroke="#101010" /></Svg>
      </div>
    </div>
  );
}

export default function App() {
  return (
    <div className="flex h-[720px] w-[1280px] flex-col overflow-hidden border-x border-black bg-[#efeff2] font-['Open_Sans','Noto_Sans',sans-serif]">
      <TitleBar />
      <Ribbon />
      <div className="flex min-h-0 flex-1">
        <OutlinePanel />
        <GraphicsView />
        <div className="ml-[4px] flex min-w-0 flex-1 flex-col">
          <DetailsPanel />
          <GraphPanel />
        </div>
      </div>
      <StatusBar />
      <Taskbar />
    </div>
  );
}
